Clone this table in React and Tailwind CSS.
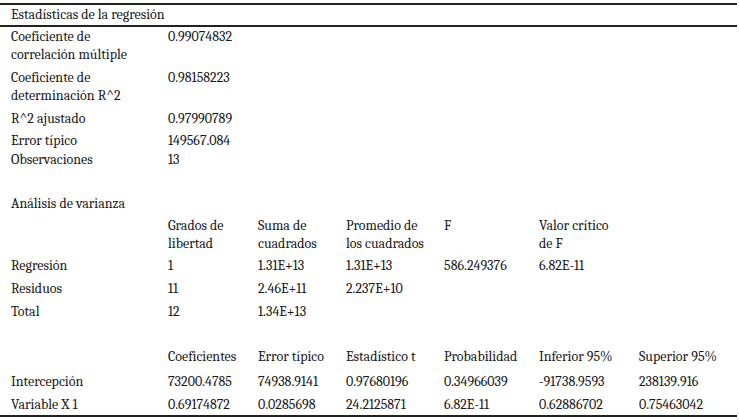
import React from "react";

const cols = "grid grid-cols-[157px_90px_88px_98px_95px_100px_1fr]";

export default function App() {
  return (
    <div className="w-[739px] h-[420px] bg-white text-[#1a1a1a] text-[14px] leading-[18px] font-serif">
      <div className="pt-[3px] w-[737px]">
        <div className="border-t-2 border-[#222] h-[22px] pl-[11px] pt-[1px]">Estadísticas de la regresión</div>
        <div className="border-t-2 border-[#222] pl-[11px] pt-[1px] flex flex-col">
          <div className={`${cols} h-[41px]`}>
            <div>Coeficiente de<br />correlación múltiple</div>
            <div>0.99074832</div>
          </div>
          <div className={`${cols} h-[41px]`}>
            <div>Coeficiente de<br />determinación R^2</div>
            <div>0.98158223</div>
          </div>
          <div className={`${cols} h-[22px]`}>
            <div>R^2 ajustado</div>
            <div>0.97990789</div>
          </div>
          <div className={`${cols} h-[19px]`}>
            <div>Error típico</div>
            <div>149567.084</div>
          </div>
          <div className={`${cols} h-[44px]`}>
            <div>Observaciones</div>
            <div>13</div>
          </div>
          <div className={`${cols} h-[22px]`}>
            <div>Análisis de varianza</div>
          </div>
          <div className={`${cols} h-[40px]`}>
            <div></div>
            <div>Grados de<br />libertad</div>
            <div>Suma de<br />cuadrados</div>
            <div>Promedio de<br />los cuadrados</div>
            <div>F</div>
            <div>Valor crítico<br />de F</div>
          </div>
          <div className={`${cols} h-[23px]`}>
            <div>Regresión</div>
            <div>1</div>
            <div>1.31E+13</div>
            <div>1.31E+13</div>
            <div>586.249376</div>
            <div>6.82E-11</div>
          </div>
          <div className={`${cols} h-[23px]`}>
            <div>Residuos</div>
            <div>11</div>
            <div>2.46E+11</div>
            <div>2.237E+10</div>
          </div>
          <div className={`${cols} h-[45px]`}>
            <div>Total</div>
            <div>12</div>
            <div>1.34E+13</div>
          </div>
          <div className={`${cols} h-[25px]`}>
            <div></div>
            <div>Coeficientes</div>
            <div>Error típico</div>
            <div>Estadístico t</div>
            <div>Probabilidad</div>
            <div>Inferior 95%</div>
            <div>Superior 95%</div>
          </div>
          <div className={`${cols} h-[23px]`}>
            <div>Intercepción</div>
            <div>73200.4785</div>
            <div>74938.9141</div>
            <div>0.97680196</div>
            <div>0.34966039</div>
            <div>-91738.9593</div>
            <div>238139.916</div>
          </div>
          <div className={`${cols} h-[19px]`}>
            <div>Variable X 1</div>
            <div>0.69174872</div>
            <div>0.0285698</div>
            <div>24.2125871</div>
            <div>6.82E-11</div>
            <div>0.62886702</div>
            <div>0.75463042</div>
          </div>
        </div>
        <div className="border-t-2 border-[#222]"></div>
      </div>
    </div>
  );
}
